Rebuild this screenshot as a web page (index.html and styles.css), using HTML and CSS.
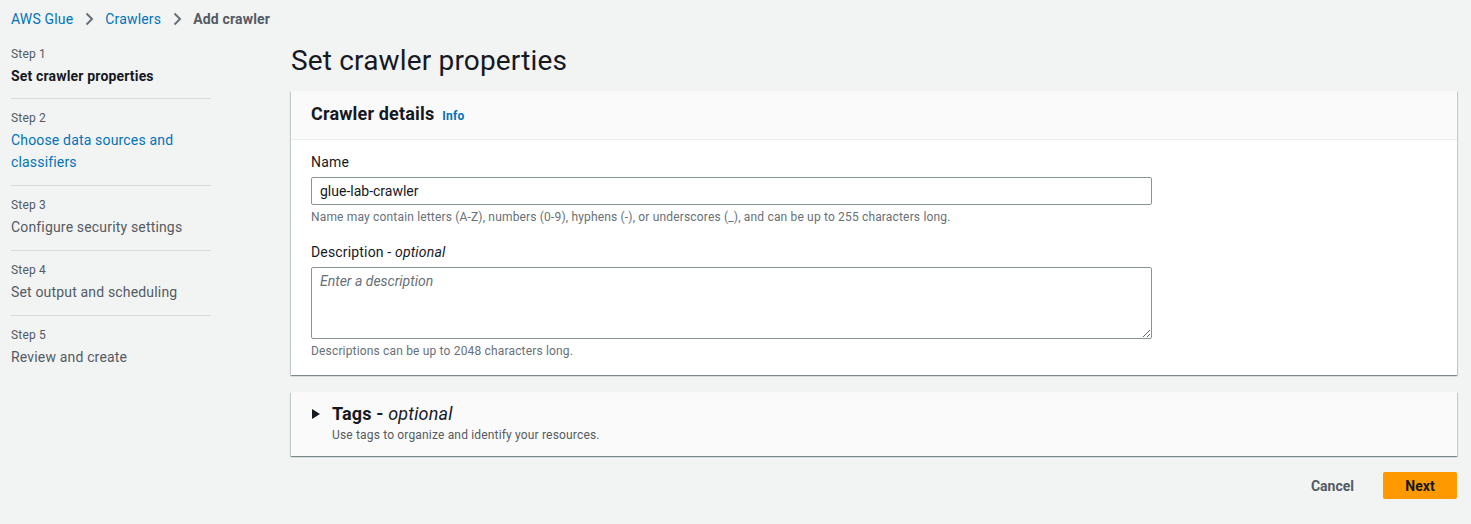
FILE: index.html
```html
<!DOCTYPE html>
<html>
<head>
<meta charset="utf-8">
<link rel="stylesheet" href="styles.css">
</head>
<body>
<nav class="breadcrumbs">
  <a class="crumb-link" href="#">AWS Glue</a>
  <svg class="chev" width="16" height="16" viewBox="0 0 16 16"><path d="M5.5 2.5 L11 8 L5.5 13.5" fill="none" stroke="#687078" stroke-width="2"/></svg>
  <a class="crumb-link" href="#">Crawlers</a>
  <svg class="chev" width="16" height="16" viewBox="0 0 16 16"><path d="M5.5 2.5 L11 8 L5.5 13.5" fill="none" stroke="#687078" stroke-width="2"/></svg>
  <span class="crumb-current">Add crawler</span>
</nav>
<div class="layout">
  <aside class="steps">
    <div class="step first">
      <div class="step-label">Step 1</div>
      <div class="step-title current">Set crawler properties</div>
    </div>
    <div class="step">
      <div class="step-label">Step 2</div>
      <a class="step-title link" href="#">Choose data sources and classifiers</a>
    </div>
    <div class="step">
      <div class="step-label">Step 3</div>
      <div class="step-title">Configure security settings</div>
    </div>
    <div class="step">
      <div class="step-label">Step 4</div>
      <div class="step-title">Set output and scheduling</div>
    </div>
    <div class="step">
      <div class="step-label">Step 5</div>
      <div class="step-title">Review and create</div>
    </div>
  </aside>
  <main class="main">
    <h1 class="page-title">Set crawler properties</h1>
    <section class="container">
      <div class="container-header">
        <h2 class="container-title">Crawler details</h2>
        <a class="info" href="#">Info</a>
      </div>
      <div class="container-body">
        <div class="field">
          <label class="field-label">Name</label>
          <input class="text-input" type="text" value="glue-lab-crawler">
          <div class="hint">Name may contain letters (A-Z), numbers (0-9), hyphens (-), or underscores (_), and can be up to 255 characters long.</div>
        </div>
        <div class="field second">
          <label class="field-label">Description - <i>optional</i></label>
          <textarea class="text-area" placeholder="Enter a description"></textarea>
          <div class="hint">Descriptions can be up to 2048 characters long.</div>
        </div>
      </div>
    </section>
    <section class="container tags">
      <div class="tags-row">
        <svg class="caret" width="8" height="10" viewBox="0 0 8 10"><path d="M0 0 L8 5 L0 10 Z" fill="#16191f"/></svg>
        <div>
          <div class="tags-title">Tags - <i>optional</i></div>
          <div class="tags-desc">Use tags to organize and identify your resources.</div>
        </div>
      </div>
    </section>
    <div class="actions">
      <button class="btn-link">Cancel</button>
      <button class="btn-primary">Next</button>
    </div>
  </main>
</div>
</body>
</html>
```

FILE: styles.css
```css
* { box-sizing: border-box; }
html, body {
  margin: 0;
  background: #f2f3f3;
  font-family: Roboto, "Liberation Sans", sans-serif;
  color: #16191f;
  font-size: 14px;
  line-height: 22px;
  letter-spacing: 0.012em;
}
a { text-decoration: none; }
.breadcrumbs {
  display: flex;
  align-items: center;
  padding: 8px 11px 0;
  height: 30px;
  gap: 8px;
}
.crumb-link { color: #0073bb; }
.crumb-current { color: #545b64; font-weight: 700; }
.chev { display: block; }
.layout {
  display: flex;
  padding: 16px 14px 0 11px;
  gap: 80px;
}
.steps {
  width: 200px;
  flex: none;
}
.step {
  border-top: 1px solid #d5dbdb;
  padding: 11px 0 12px;
}
.step.first { border-top: none; padding-top: 0; padding-bottom: 11px; }
.step-label {
  font-size: 12px;
  line-height: 16px;
  color: #545b64;
  margin-bottom: 3px;
}
.step-title { color: #545b64; display: block; }
.step-title.current { color: #16191f; font-weight: 700; }
.step-title.link { color: #0073bb; }
.main { flex: 1; }
.page-title {
  margin: -3px 0 12px;
  font-size: 28px;
  line-height: 36px;
  font-weight: 400;
}
.container {
  background: #fff;
  box-shadow: 0 1px 1px 0 rgba(0,28,36,.3), 1px 1px 1px 0 rgba(0,28,36,.15), -1px 1px 1px 0 rgba(0,28,36,.15);
}
.container-header {
  background: #fafafa;
  border-bottom: 1px solid #eaeded;
  padding: 12px 20px;
  display: flex;
  align-items: baseline;
  gap: 8px;
}
.container-title {
  margin: 0;
  font-size: 18px;
  line-height: 22px;
  font-weight: 700;
}
.info { color: #0073bb; font-size: 12px; font-weight: 700; }
.container-body { padding: 11px 20px 16px; }
.field-label { display: block; margin-bottom: 4px; }
.field.second { margin-top: 16px; }
.text-input {
  display: block;
  width: 841px;
  height: 28px;
  border: 1px solid #879596;
  border-radius: 2px;
  padding: 0 8px;
  font: inherit;
  color: #16191f;
}
.text-area {
  display: block;
  width: 841px;
  height: 72px;
  border: 1px solid #879596;
  border-radius: 2px;
  padding: 3px 8px;
  font: inherit;
  line-height: 20px;
  resize: vertical;
}
.text-area::placeholder { color: #687078; font-style: italic; }
.hint {
  font-size: 12px;
  line-height: 16px;
  color: #687078;
  margin-top: 4px;
}
.tags {
  margin-top: 17px;
  background: #fafafa;
}
.tags-row {
  display: flex;
  align-items: flex-start;
  gap: 12px;
  padding: 11px 20px 13px 21px;
}
.caret { margin-top: 6px; flex: none; }
.tags-title { font-size: 18px; line-height: 22px; font-weight: 700; }
.tags-title i { font-weight: 400; }
.tags-desc { font-size: 12px; line-height: 16px; color: #545b64; margin-top: 2px; }
.actions {
  display: flex;
  justify-content: flex-end;
  align-items: center;
  margin-top: 16px;
  gap: 9px;
}
.btn-link {
  border: none;
  background: none;
  font: inherit;
  font-weight: 700;
  color: #545b64;
  padding: 2px 20px;
}
.btn-primary {
  border: none;
  background: #ff9900;
  border-radius: 2px;
  font: inherit;
  font-weight: 700;
  color: #16191f;
  padding: 2px 20px;
  height: 27px;
  width: 74px;
}
```
